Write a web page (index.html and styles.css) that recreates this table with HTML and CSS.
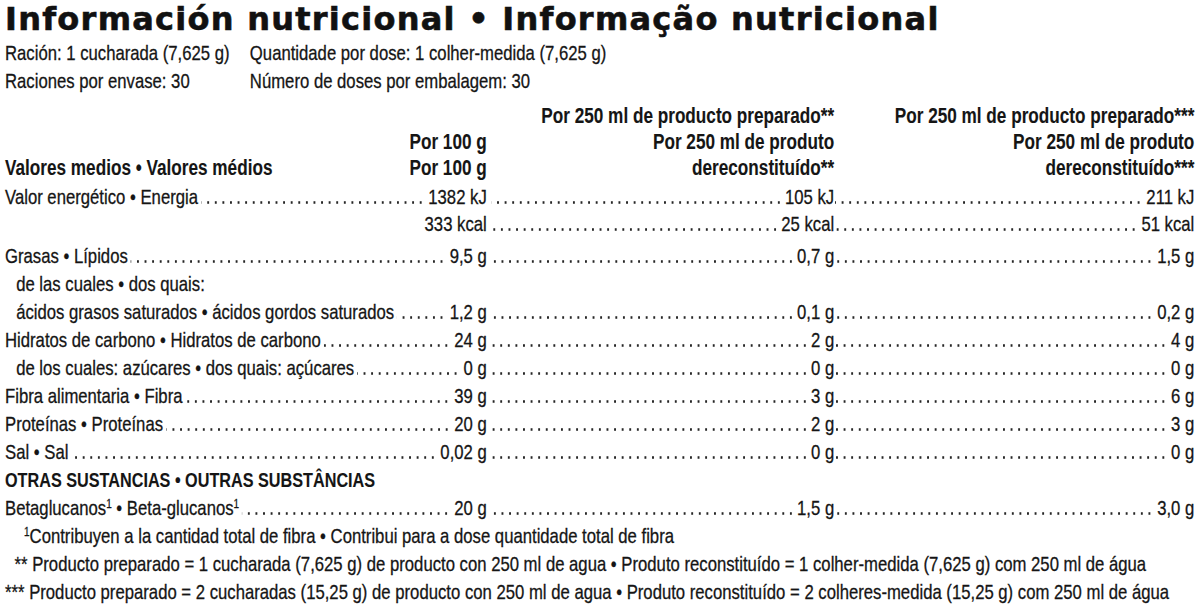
FILE: index.html
```html
<!DOCTYPE html>
<html lang="es">
<head>
<meta charset="utf-8">
<title>Información nutricional</title>
<link rel="stylesheet" href="styles.css">
</head>
<body>
<div class="label">
  <h1 class="title">Información nutricional • Informação nutricional</h1>

  <div class="narrow">
    <div class="serving">
      <span>Ración: 1 cucharada (7,625 g)</span><span>Quantidade por dose: 1 colher-medida (7,625 g)</span>
      <span>Raciones por envase: 30</span><span>Número de doses por embalagem: 30</span>
    </div>

    <div class="table">
      <div class="row head first-head">
        <div class="cell"></div>
        <div class="cell">Por 250 ml de producto preparado**</div>
        <div class="cell">Por 250 ml de producto preparado***</div>
      </div>
      <div class="row head">
        <div class="cell">Por 100 g</div>
        <div class="cell">Por 250 ml de produto</div>
        <div class="cell">Por 250 ml de produto</div>
      </div>
      <div class="row head">
        <div class="cell split"><span>Valores medios • Valores médios</span><span>Por 100 g</span></div>
        <div class="cell">dereconstituído**</div>
        <div class="cell">dereconstituído***</div>
      </div>

      <div class="row energy">
        <div class="cell first"><span>Valor energético • Energia</span><i class="lead"></i><span>1382 kJ</span></div>
        <div class="cell"><i class="lead"></i><span>105 kJ</span></div>
        <div class="cell"><i class="lead"></i><span>211 kJ</span></div>
      </div>
      <div class="row kcal">
        <div class="cell"><span>333 kcal</span></div>
        <div class="cell"><i class="lead"></i><span>25 kcal</span></div>
        <div class="cell"><i class="lead"></i><span>51 kcal</span></div>
      </div>

      <div class="row gap">
        <div class="cell first"><span>Grasas • Lípidos</span><i class="lead"></i><span>9,5 g</span></div>
        <div class="cell"><i class="lead"></i><span>0,7 g</span></div>
        <div class="cell"><i class="lead"></i><span>1,5 g</span></div>
      </div>
      <div class="row">
        <div class="cell first indent"><span>de las cuales • dos quais:</span></div>
      </div>
      <div class="row">
        <div class="cell first indent"><span>ácidos grasos saturados • ácidos gordos saturados</span><i class="lead"></i><span>1,2 g</span></div>
        <div class="cell"><i class="lead"></i><span>0,1 g</span></div>
        <div class="cell"><i class="lead"></i><span>0,2 g</span></div>
      </div>
      <div class="row">
        <div class="cell first"><span>Hidratos de carbono • Hidratos de carbono</span><i class="lead"></i><span>24 g</span></div>
        <div class="cell"><i class="lead"></i><span>2 g</span></div>
        <div class="cell"><i class="lead"></i><span>4 g</span></div>
      </div>
      <div class="row">
        <div class="cell first indent"><span>de los cuales: azúcares • dos quais: açúcares</span><i class="lead"></i><span>0 g</span></div>
        <div class="cell"><i class="lead"></i><span>0 g</span></div>
        <div class="cell"><i class="lead"></i><span>0 g</span></div>
      </div>
      <div class="row">
        <div class="cell first"><span>Fibra alimentaria • Fibra</span><i class="lead"></i><span>39 g</span></div>
        <div class="cell"><i class="lead"></i><span>3 g</span></div>
        <div class="cell"><i class="lead"></i><span>6 g</span></div>
      </div>
      <div class="row">
        <div class="cell first"><span>Proteínas • Proteínas</span><i class="lead"></i><span>20 g</span></div>
        <div class="cell"><i class="lead"></i><span>2 g</span></div>
        <div class="cell"><i class="lead"></i><span>3 g</span></div>
      </div>
      <div class="row">
        <div class="cell first"><span>Sal • Sal</span><i class="lead"></i><span>0,02 g</span></div>
        <div class="cell"><i class="lead"></i><span>0 g</span></div>
        <div class="cell"><i class="lead"></i><span>0 g</span></div>
      </div>
      <div class="row section">
        <div class="cell first wide"><span>OTRAS SUSTANCIAS • OUTRAS SUBSTÂNCIAS</span></div>
      </div>
      <div class="row">
        <div class="cell first"><span>Betaglucanos<sup>1</sup> • Beta-glucanos<sup>1</sup></span><i class="lead"></i><span>20 g</span></div>
        <div class="cell"><i class="lead"></i><span>1,5 g</span></div>
        <div class="cell"><i class="lead"></i><span>3,0 g</span></div>
      </div>
    </div>

    <div class="notes">
      <p class="note n1"><sup>1</sup>Contribuyen a la cantidad total de fibra • Contribui para a dose quantidade total de fibra</p>
      <p class="note n2">** Producto preparado = 1 cucharada (7,625 g) de producto con 250 ml de agua • Produto reconstituído = 1 colher-medida (7,625 g) com 250 ml de água</p>
      <p class="note n3">*** Producto preparado = 2 cucharadas (15,25 g) de producto con 250 ml de agua • Produto reconstituído = 2 colheres-medida (15,25 g) com 250 ml de água</p>
    </div>
  </div>
</div>
</body>
</html>
```

FILE: styles.css
```css
html, body {
  margin: 0;
  padding: 0;
  background: #ffffff;
  overflow: hidden;
}

body {
  color: #151515;
  font-family: "Liberation Sans", Arial, sans-serif;
  font-size: 21px;
  line-height: 28px;
}

.label {
  padding: 0 6px 0 5px;
}

.title {
  margin: 0;
  padding-top: 1px;
  font-family: "DejaVu Sans", Verdana, sans-serif;
  font-weight: bold;
  font-size: 32px;
  line-height: 36px;
  letter-spacing: 1.25px;
  -webkit-text-stroke: 0.6px #111111;
  color: #111111;
  white-space: nowrap;
}

/* condensed type: the whole block is drawn at 79.5% width, like a narrow face */
.narrow {
  width: 1496px;
  transform: scaleX(0.795);
  transform-origin: 0 0;
  -webkit-text-stroke: 0.3px #151515;
}

.serving {
  display: grid;
  grid-template-columns: 308px auto;
  margin-top: 2px;
  white-space: nowrap;
}

.table {
  margin-top: 8px;
}

.row {
  display: grid;
  grid-template-columns: 606px 437px 453px;
  line-height: 28px;
}

.row.head {
  font-weight: bold;
  font-size: 21.6px;
  line-height: 26px;
  -webkit-text-stroke: 0.1px #151515;
}

.row.energy {
  margin-top: 2px;
}

.row.kcal {
  line-height: 26px;
}

.row.gap {
  margin-top: 5px;
}

.row.section {
  font-weight: bold;
  font-size: 20.4px;
  -webkit-text-stroke: 0.1px #151515;
}

.cell {
  display: flex;
  align-items: baseline;
  justify-content: flex-end;
  white-space: nowrap;
  min-width: 0;
}

.cell.first {
  justify-content: flex-start;
}

.cell.split {
  justify-content: space-between;
}

.cell.indent {
  padding-left: 14px;
}

.cell.wide {
  grid-column: 1 / 4;
}

.lead {
  flex: 1;
  align-self: baseline;
  height: 3px;
  margin: 0 5px 0 4px;
  background-image: radial-gradient(circle, #262626 1.05px, rgba(0, 0, 0, 0) 1.55px);
  background-size: 9.56px 3px;
  background-repeat: repeat-x;
  background-position: right 0 bottom 0;
}

.row > .cell:nth-child(2) > .lead {
  margin-left: 6px;
  margin-right: 3px;
}

.row > .cell:nth-child(3) > .lead {
  margin-left: 1px;
  margin-right: 5px;
}

sup {
  font-size: 12.5px;
  line-height: 0;
  vertical-align: 7px;
}

.notes {
  white-space: nowrap;
}

.note {
  margin: 0;
  line-height: 28px;
}

.note.n1 {
  padding-left: 24px;
}

.note.n2 {
  padding-left: 12px;
}
```
